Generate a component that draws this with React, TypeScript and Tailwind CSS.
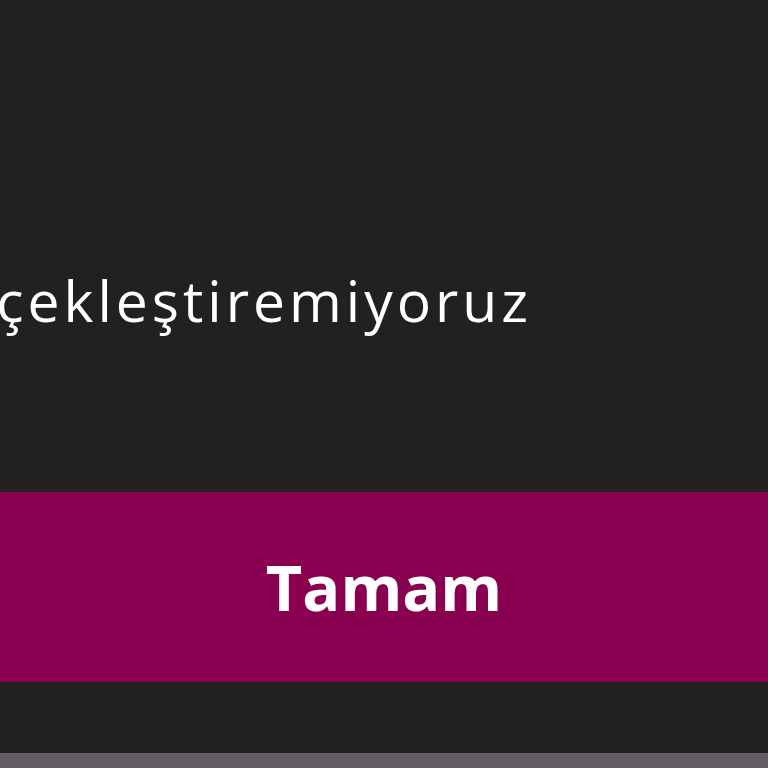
export default function App() {
  return (
    <div className="w-[768px] h-[768px] overflow-hidden bg-[#222120] flex flex-col font-['Open_Sans','Lato',sans-serif]">
      {/* Message, cut off on the left like the crop */}
      <div className="h-[492px] flex flex-col">
        <div className="mt-[260px] w-[532px] flex justify-end overflow-hidden">
          <p className="whitespace-nowrap text-white text-[57px] leading-[80px] tracking-[4px]">
            İşleminizi şu anda gerçekleştiremiyoruz
          </p>
        </div>
      </div>

      <button className="h-[190px] w-full bg-[#8a0050] flex items-center justify-center text-white text-[63px] font-bold">
        Tamam
      </button>

      <div className="flex-1" />
      <div className="h-[15px] bg-[#625d62]" />
    </div>
  );
}
